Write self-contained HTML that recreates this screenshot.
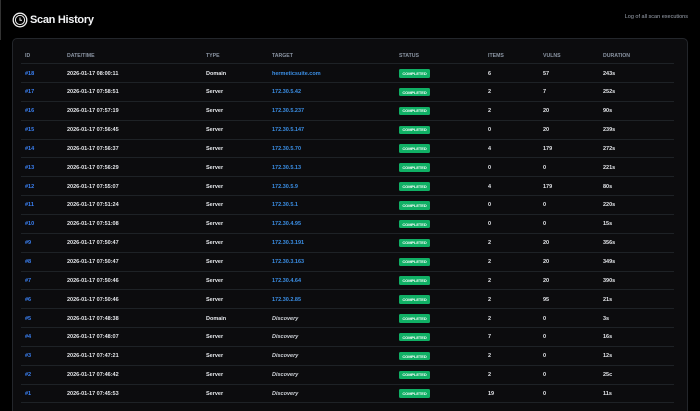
<!DOCTYPE html>
<html style="width:700px;height:411px;overflow:hidden"><head><meta charset="utf-8"><style>
*{margin:0;padding:0;box-sizing:border-box}
body{width:700px;height:411px;background:#000;font-family:"Liberation Sans",sans-serif;color:#e5e7eb;position:relative;overflow:hidden}
.lb{position:absolute;left:0;top:0;width:1px;height:40px;background:#333}
h1{position:absolute;left:30px;top:14px;font-size:11px;font-weight:bold;color:#f3f4f6;letter-spacing:-0.3px}
.ic{position:absolute;left:12px;top:12px}
.sub{position:absolute;right:12px;top:14px;font-size:5.5px;color:#9ca3af}
.card{position:absolute;left:12px;top:38px;width:676px;height:380px;background:#0c0c0e;border:1px solid #23262b;border-radius:5px}
.row{position:absolute;left:8px;width:653px;height:19px;border-bottom:1px solid #1e2226;font-size:5.5px;font-weight:bold;color:#e5e7eb}
.row span{position:absolute;top:6.5px;white-space:nowrap}
.hd{color:#8b95a3;font-size:5.2px}
.id{color:#3b82f6}.tg{color:#3b8fe6}.it{font-style:italic;color:#d1d5db}
.b{background:#10b065;color:#fff;font-size:4px;padding:1.8px 3px;border-radius:1.5px;top:5px!important;width:31px;text-align:center;letter-spacing:-0.1px}
</style></head><body>
<div class="lb"></div>
<svg class="ic" width="16" height="16" viewBox="0 0 16 16"><circle cx="8" cy="8" r="6.8" fill="none" stroke="#eee" stroke-width="1.3"/><circle cx="8" cy="8" r="4.6" fill="none" stroke="#eee" stroke-width="1"/><path d="M8 5.5V8.3H10" fill="none" stroke="#eee" stroke-width="1"/></svg>
<h1>Scan History</h1>
<div class="sub">Log of all scan executions</div>
<div class="card">
<div id="t"></div>
</div>
<script>
var rows=[["#18","2026-01-17 08:00:11","Domain","hermeticsuite.com","6","57","243s"],
["#17","2026-01-17 07:58:51","Server","172.30.5.42","2","7","252s"],
["#16","2026-01-17 07:57:19","Server","172.30.5.237","2","20","90s"],
["#15","2026-01-17 07:56:45","Server","172.30.5.147","0","20","239s"],
["#14","2026-01-17 07:56:37","Server","172.30.5.70","4","179","272s"],
["#13","2026-01-17 07:56:29","Server","172.30.5.13","0","0","221s"],
["#12","2026-01-17 07:55:07","Server","172.30.5.9","4","179","80s"],
["#11","2026-01-17 07:51:24","Server","172.30.5.1","0","0","220s"],
["#10","2026-01-17 07:51:08","Server","172.30.4.95","0","0","15s"],
["#9","2026-01-17 07:50:47","Server","172.30.3.191","2","20","356s"],
["#8","2026-01-17 07:50:47","Server","172.30.3.163","2","20","349s"],
["#7","2026-01-17 07:50:46","Server","172.30.4.64","2","20","390s"],
["#6","2026-01-17 07:50:46","Server","172.30.2.85","2","95","21s"],
["#5","2026-01-17 07:48:38","Domain","Discovery","2","0","3s"],
["#4","2026-01-17 07:48:07","Server","Discovery","7","0","16s"],
["#3","2026-01-17 07:47:21","Server","Discovery","2","0","12s"],
["#2","2026-01-17 07:46:42","Server","Discovery","2","0","25c"],
["#1","2026-01-17 07:45:53","Server","Discovery","19","0","11s"]];
var xs=[4,46,185,251,378,467,522,582];
var h='<div class="row hd" style="top:7px;height:18px">';
["ID","DATE/TIME","TYPE","TARGET","STATUS","ITEMS","VULNS","DURATION"].forEach(function(t,i){h+='<span style="left:'+xs[i]+'px">'+t+'</span>'});
h+='</div>';
rows.forEach(function(r,k){
var top=25+k*18.85;
h+='<div class="row" style="top:'+top+'px">';
h+='<span class="id" style="left:'+xs[0]+'px">'+r[0]+'</span>';
h+='<span style="left:'+xs[1]+'px">'+r[1]+'</span>';
h+='<span style="left:'+xs[2]+'px">'+r[2]+'</span>';
h+='<span class="'+(r[3]=="Discovery"?"it":"tg")+'" style="left:'+xs[3]+'px">'+r[3]+'</span>';
h+='<span class="b" style="left:'+xs[4]+'px">COMPLETED</span>';
h+='<span style="left:'+xs[5]+'px">'+r[4]+'</span>';
h+='<span style="left:'+xs[6]+'px">'+r[5]+'</span>';
h+='<span style="left:'+xs[7]+'px">'+r[6]+'</span></div>';
});
document.getElementById('t').innerHTML=h;
</script>
</body></html>
